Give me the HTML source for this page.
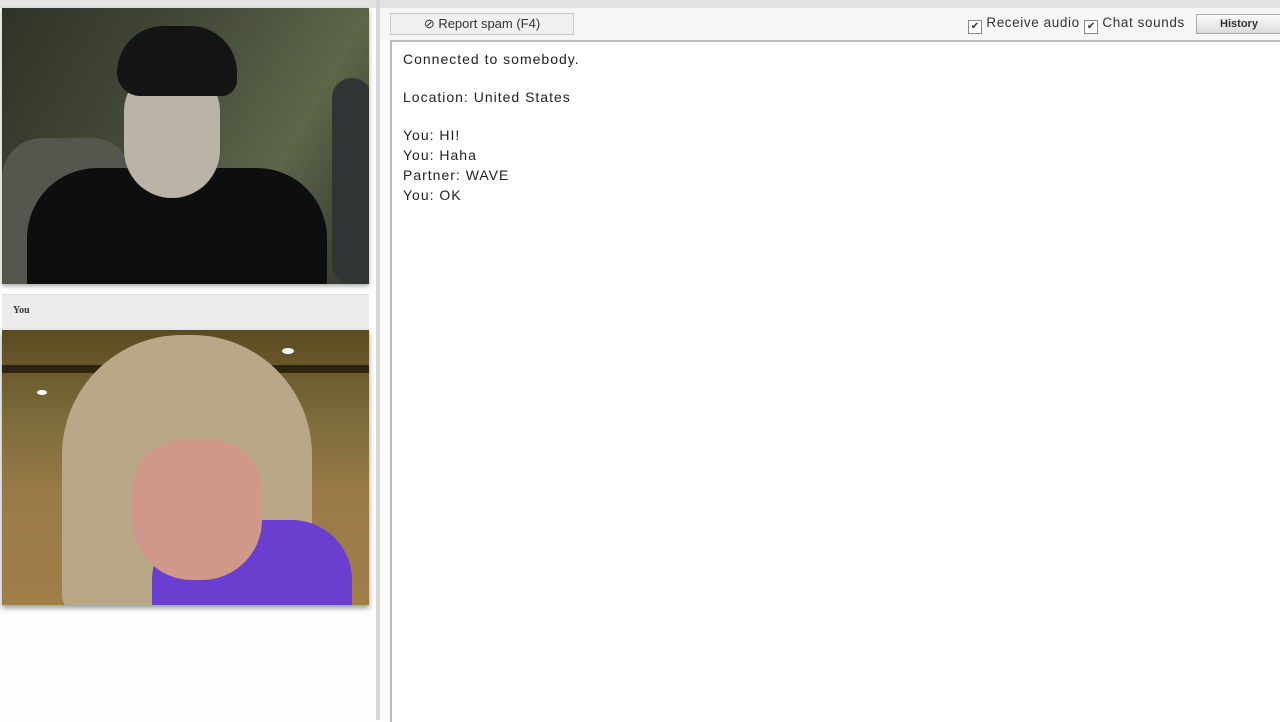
<!DOCTYPE html>
<html><head><style>
body{margin:0;width:1280px;height:720px;overflow:hidden;background:#fdfdfd;font-family:"Liberation Sans",sans-serif;position:relative}
.a{position:absolute}
.chat div{font-size:14px;color:#222;line-height:20px;letter-spacing:1px}
.cb{display:inline-block;width:12px;height:12px;border:1px solid #888;background:#fff;font-size:10px;line-height:12px;text-align:center;vertical-align:-2px;letter-spacing:0}
</style></head><body>
<div class="a" style="left:0;top:0;width:376px;height:8px;background:#e4e4e4"></div>
<div class="a" style="left:376px;top:0;width:4px;height:720px;background:#d8d8d8"></div>
<div class="a" style="left:380px;top:0;width:900px;height:8px;background:#e2e2e2"></div>
<div class="a" style="left:380px;top:8px;width:900px;height:32px;background:#f6f6f6"></div>
<!-- video 1 -->
<div class="a" style="left:2px;top:8px;width:367px;height:276px;overflow:hidden;background:linear-gradient(120deg,#2e3327 0%,#454b39 40%,#5d6649 70%,#2e342c 100%);box-shadow:0 2px 4px #aaa">
 <div class="a" style="left:0;top:130px;width:130px;height:146px;background:#55574f;border-radius:40px 40px 0 0"></div>
 <div class="a" style="left:330px;top:70px;width:40px;height:206px;background:#2f3434;border-radius:20px"></div>
 <div class="a" style="left:25px;top:160px;width:300px;height:130px;background:#0e0e0e;border-radius:70px 70px 0 0"></div>
 <div class="a" style="left:122px;top:60px;width:96px;height:130px;background:#b9b4a7;border-radius:45px 45px 50px 50px"></div>
 <div class="a" style="left:115px;top:18px;width:120px;height:70px;background:#141414;border-radius:60px 60px 20px 30px"></div>
</div>
<!-- label -->
<div class="a" style="left:2px;top:294px;width:367px;height:36px;background:#ececec;border-top:1px solid #ddd"></div>
<div class="a" style="left:13px;top:305px;font-size:10px;font-weight:bold;color:#333;font-family:'Liberation Serif',serif">You</div>
<!-- video 2 -->
<div class="a" style="left:2px;top:330px;width:367px;height:275px;overflow:hidden;background:linear-gradient(180deg,#5a4a20 0%,#7a6a3a 30%,#9a7a48 60%,#a07e4a 100%);box-shadow:0 3px 5px #999">
 <div class="a" style="left:0;top:35px;width:367px;height:8px;background:#2e2510"></div>
 <div class="a" style="left:280px;top:18px;width:12px;height:6px;background:#fff;border-radius:50%"></div>
 <div class="a" style="left:35px;top:60px;width:10px;height:5px;background:#fff;border-radius:50%"></div>
 <div class="a" style="left:60px;top:5px;width:250px;height:280px;background:#b8a888;border-radius:120px 120px 20px 20px"></div>
 <div class="a" style="left:150px;top:190px;width:200px;height:90px;background:#6a3fd0;border-radius:60px 60px 0 0"></div>
 <div class="a" style="left:130px;top:110px;width:130px;height:140px;background:#d0988a;border-radius:50px 50px 60px 60px"></div>
</div>
<!-- toolbar -->
<div class="a" style="left:390px;top:13px;width:182px;height:20px;background:#f0f0f0;border:1px solid #c8c8c8;font-size:13px;color:#333;text-align:center;line-height:20px">⊘ Report spam (F4)</div>
<div class="a" style="left:968px;top:15px;font-size:13.5px;color:#333;line-height:16px;white-space:nowrap;letter-spacing:0.6px"><span class="cb">✔</span> Receive audio <span class="cb">✔</span> Chat sounds</div>
<div class="a" style="left:1196px;top:14px;width:84px;height:18px;background:linear-gradient(#fafafa,#dcdcdc);border:1px solid #aaa;font-size:11px;font-weight:bold;color:#333;text-align:center;line-height:18px">History</div>
<!-- chat box -->
<div class="a" style="left:390px;top:40px;width:890px;height:680px;border-left:2px solid #bbb;border-top:2px solid #bbb;background:#fff"></div>
<div class="a chat" style="left:403px;top:49px">
<div>Connected to somebody.</div>
<div style="margin-top:18px">Location: United States</div>
<div style="margin-top:18px">You: HI!</div>
<div>You: Haha</div>
<div>Partner: WAVE</div>
<div>You: OK</div>
</div>
</body></html>
